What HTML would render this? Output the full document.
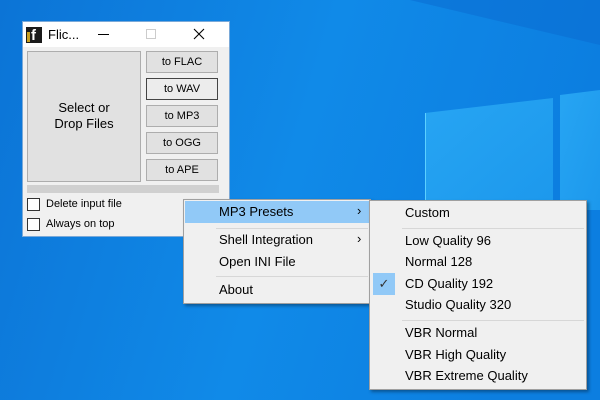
<!DOCTYPE html>
<html><head><meta charset="utf-8"><style>
*{margin:0;padding:0;box-sizing:border-box}
body{width:600px;height:400px;overflow:hidden;position:relative;font-family:"Liberation Sans",sans-serif;background:#0b7ad9}
.abs{position:absolute}
.btn{position:absolute;left:146px;width:72px;height:22px;background:#e1e1e1;border:1px solid #adadad;font-size:11px;text-align:center;line-height:20px;color:#000}
.menu{position:absolute;background:#f0f0f0;border:1px solid #a0a0a0;box-shadow:2px 2px 3px rgba(0,0,0,.35);font-size:13px;color:#000}
.mi{position:absolute;white-space:nowrap}
.sep{position:absolute;height:1px;background:#d7d7d7}
.cb{position:absolute;left:27px;width:13px;height:13px;background:#fff;border:1px solid #333}
</style></head><body>
<svg class="abs" style="left:0;top:0" width="600" height="400">
<defs>
<linearGradient id="bg" x1="0" y1="0" x2="1" y2="0.2">
<stop offset="0" stop-color="#0c74d6"/><stop offset="0.55" stop-color="#108ae8"/><stop offset="1" stop-color="#0c7ee0"/></linearGradient>
<linearGradient id="pn" x1="0" y1="0" x2="1" y2="1"><stop offset="0" stop-color="#27a5f3"/><stop offset="1" stop-color="#1c98ec"/></linearGradient>
</defs>
<rect width="600" height="400" fill="url(#bg)"/>
<polygon points="410,0 600,0 600,45" fill="#0a6ad0" opacity="0.5"/>
<polygon points="425,113 553,98 553,210 425,210" fill="url(#pn)"/>
<polygon points="560,95 600,90 600,210 560,210" fill="url(#pn)"/>
<line x1="425.5" y1="113" x2="425.5" y2="210" stroke="#5cd0ff" stroke-width="1"/>
</svg>
<!-- window -->
<div class="abs" style="left:22px;top:21px;width:208px;height:216px;background:#f0f0f0;border:1px solid #7aa9d8"></div>
<div class="abs" style="left:23px;top:22px;width:206px;height:25px;background:#fff"></div>
<div class="abs" style="left:26px;top:27px;width:16px;height:16px;background:#1b1b1b"></div>
<div class="abs" style="left:27px;top:32px;width:3px;height:10px;background:#c8a020"></div>
<div class="abs" style="left:31px;top:28px;font:bold 15px 'Liberation Sans',sans-serif;color:#fff;line-height:15px">f</div>
<div class="abs" style="left:48px;top:27px;font-size:13px">Flic...</div>
<div class="abs" style="left:98px;top:34px;width:11px;height:1px;background:#000"></div>
<div class="abs" style="left:146px;top:29px;width:10px;height:10px;border:1px solid #ccc"></div>
<svg class="abs" style="left:193px;top:28px" width="12" height="12"><path d="M1 1L11 11M11 1L1 11" stroke="#000" stroke-width="1.1"/></svg>
<div class="abs" style="left:27px;top:51px;width:114px;height:131px;background:#e1e1e1;border:1px solid #adadad;font-size:13px;text-align:center;padding-top:48px;line-height:16px">Select or<br>Drop Files</div>
<div class="btn" style="top:51px">to FLAC</div>
<div class="btn" style="top:78px;border:1px solid #444;background:#ececec">to WAV</div>
<div class="btn" style="top:105px">to MP3</div>
<div class="btn" style="top:132px">to OGG</div>
<div class="btn" style="top:159px">to APE</div>
<div class="abs" style="left:27px;top:185px;width:192px;height:8px;background:#d0d0d0"></div>
<div class="cb" style="top:198px"></div>
<div class="cb" style="top:218px"></div>
<div class="abs" style="left:46px;top:198px;font-size:11px">Delete input file</div>
<div class="abs" style="left:46px;top:218px;font-size:11px">Always on top</div>
<!-- menu 1 -->
<div class="menu" style="left:183px;top:199px;width:188px;height:105px">
<div class="abs" style="left:1px;top:1px;width:185px;height:22px;background:#91c9f7"></div>
<div class="mi" style="left:35px;top:4px">MP3 Presets</div><div class="mi" style="left:173px;top:3px">›</div>
<div class="sep" style="left:32px;top:28px;width:152px"></div>
<div class="mi" style="left:35px;top:32px">Shell Integration</div><div class="mi" style="left:173px;top:31px">›</div>
<div class="mi" style="left:35px;top:54px">Open INI File</div>
<div class="sep" style="left:32px;top:76px;width:152px"></div>
<div class="mi" style="left:35px;top:82px">About</div>
</div>
<!-- submenu -->
<div class="menu" style="left:369px;top:200px;width:218px;height:190px">
<div class="mi" style="left:35px;top:4px">Custom</div>
<div class="sep" style="left:32px;top:27px;width:182px"></div>
<div class="mi" style="left:35px;top:32px">Low Quality 96</div>
<div class="mi" style="left:35px;top:53px">Normal 128</div>
<div class="abs" style="left:3px;top:72px;width:22px;height:22px;background:#91c9f7;text-align:center;line-height:22px;font-size:13px;color:#333">✓</div>
<div class="mi" style="left:35px;top:75px">CD Quality 192</div>
<div class="mi" style="left:35px;top:96px">Studio Quality 320</div>
<div class="sep" style="left:32px;top:119px;width:182px"></div>
<div class="mi" style="left:35px;top:124px">VBR Normal</div>
<div class="mi" style="left:35px;top:146px">VBR High Quality</div>
<div class="mi" style="left:35px;top:167px">VBR Extreme Quality</div>
</div>
</body></html>
